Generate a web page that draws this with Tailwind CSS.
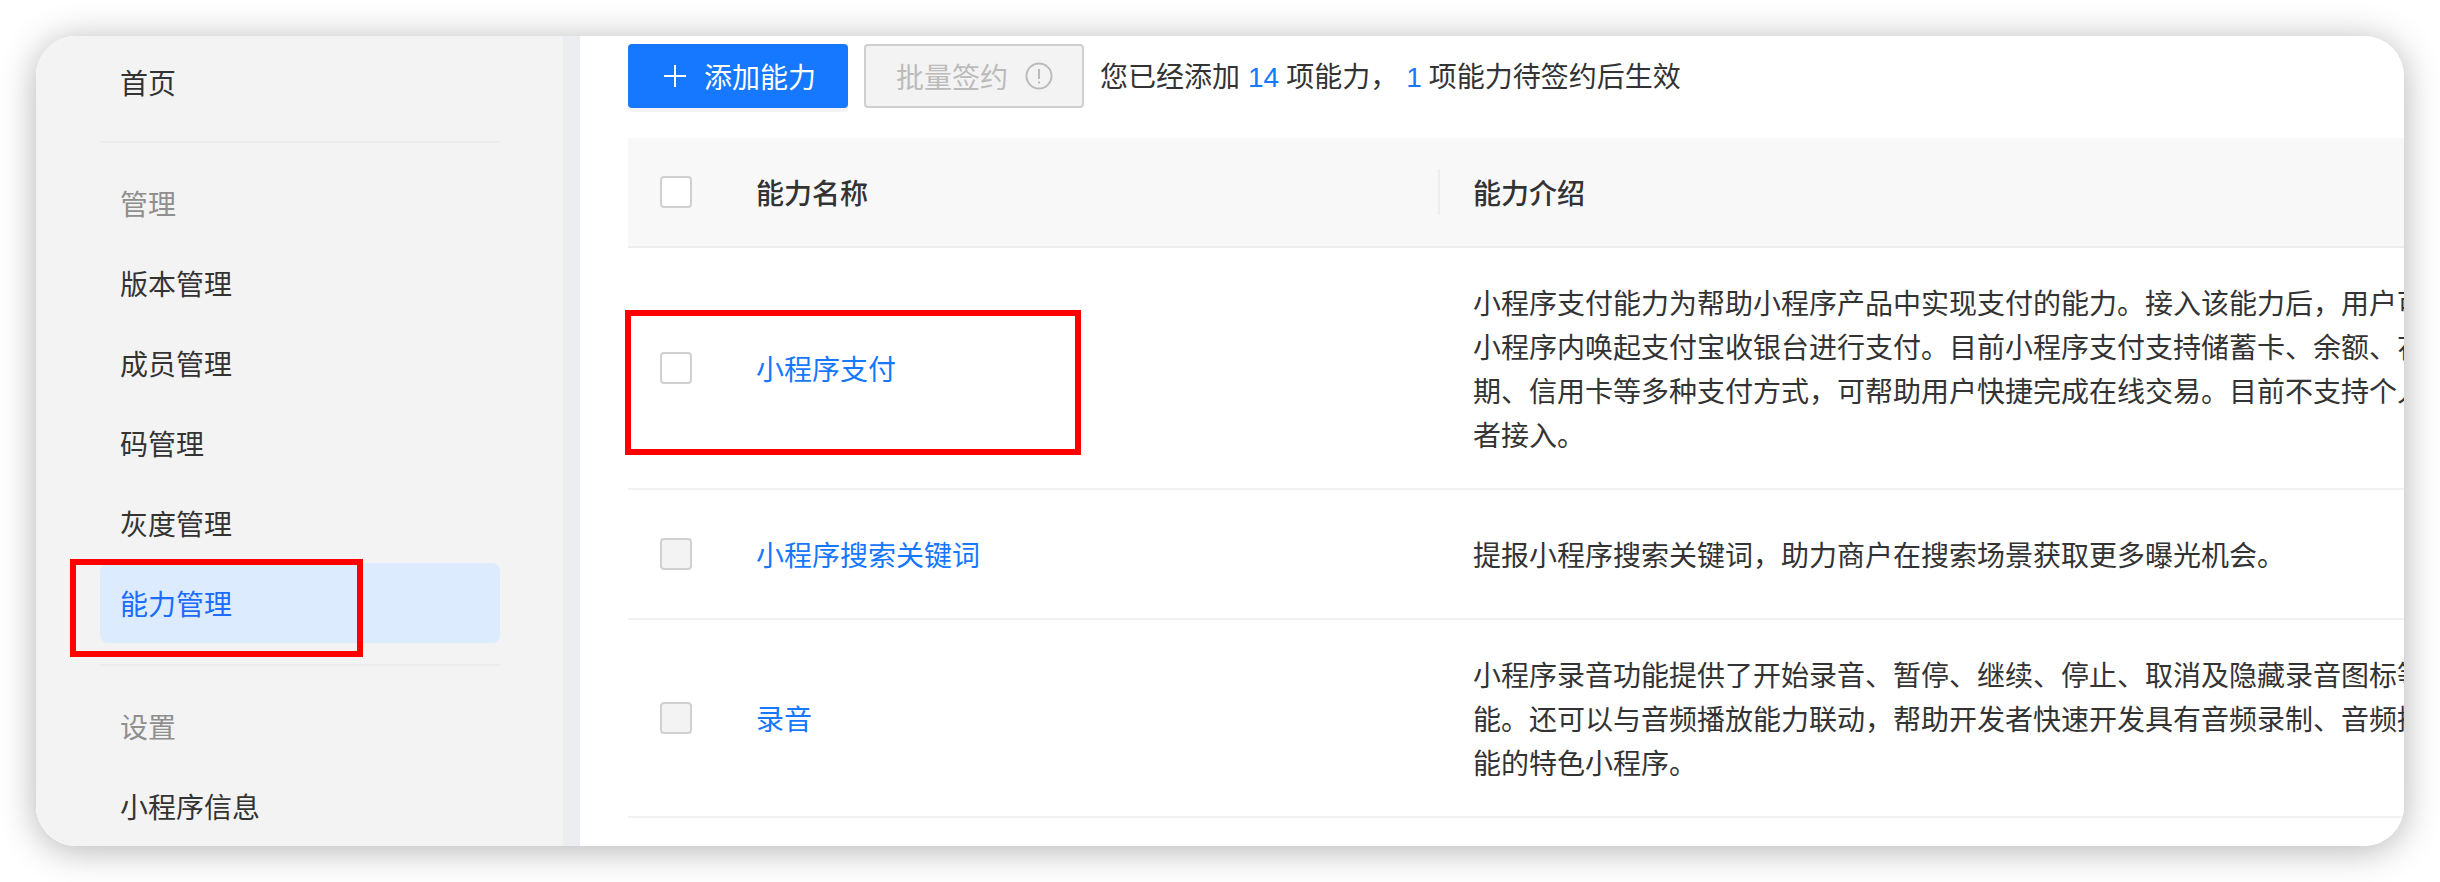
<!DOCTYPE html>
<html lang="zh-CN">
<head>
<meta charset="UTF-8" />
<title>能力管理</title>
<script src="https://cdn.jsdelivr.net/npm/@tailwindcss/browser@4"></script>
</head>
<body class="bg-white h-screen overflow-hidden font-['Noto_Sans_CJK_SC','Noto_Sans',sans-serif] text-[28px] text-[#333]">
<div class="relative ml-[36px] mt-[36px] w-[2368px] h-[810px] rounded-[40px] shadow-[0_4px_36px_rgba(0,0,0,0.3)]">
	<div class="flex h-full overflow-hidden rounded-[40px] bg-white">
		<!-- sidebar -->
		<div class="w-[527px] shrink-0 bg-[#f3f3f3] pt-[6px] pl-[64px] pr-[63px]">
			<div class="h-[80px] flex items-center pl-[20px]">首页</div>
			<div class="h-[2px] mt-[19px] bg-[#ececec]"></div>
			<div class="h-[80px] mt-[20px] flex items-center pl-[20px] text-[#8f8f8f]">管理</div>
			<div class="h-[80px] flex items-center pl-[20px]">版本管理</div>
			<div class="h-[80px] flex items-center pl-[20px]">成员管理</div>
			<div class="h-[80px] flex items-center pl-[20px]">码管理</div>
			<div class="h-[80px] flex items-center pl-[20px]">灰度管理</div>
			<div class="h-[80px] flex items-center pl-[20px] rounded-lg bg-[#dcebfd] text-[#1b6cff]">能力管理</div>
			<div class="h-[2px] mt-[21px] bg-[#ececec]"></div>
			<div class="h-[80px] mt-[20px] flex items-center pl-[20px] text-[#8f8f8f]">设置</div>
			<div class="h-[80px] flex items-center pl-[20px]">小程序信息</div>
		</div>
		<div class="w-[17px] shrink-0 bg-[#ecedf1]"></div>

		<!-- main -->
		<div class="flex-1 min-w-0 pt-[8px] pl-[48px]">
			<div class="flex items-center h-[64px]">
				<div class="flex items-center w-[220px] h-[64px] rounded bg-[#1677ff] text-white pl-[35px] shadow-[0_4px_0_#f3f3f3]">
					<svg class="w-[24px] h-[24px] mr-[17px]" viewBox="0 0 24 24" fill="none" stroke="white" stroke-width="2"><path d="M12 1v22M1 12h22" /></svg>
					添加能力
				</div>
				<div class="flex items-center w-[220px] h-[64px] ml-[16px] rounded border-2 border-[#cfcfcf] bg-[#f3f3f3] text-[#bbb] pl-[30px]">
					批量签约
					<svg class="w-[28px] h-[28px] ml-[17px]" viewBox="0 0 28 28" fill="none" stroke="#bbb" stroke-width="2"><circle cx="14" cy="14" r="12.5" /><path d="M14 7v10M14 19.5v2" /></svg>
				</div>
				<div class="ml-[16px] whitespace-nowrap">您已经添加<span class="ml-[8px] mr-[7px] text-[#1677ff] font-['Liberation_Sans',sans-serif]">14</span>项能力，<span class="ml-[8px] mr-[7px] text-[#1677ff] font-['Liberation_Sans',sans-serif]">1</span>项能力待签约后生效</div>
			</div>

			<!-- table -->
			<div class="mt-[30px]">
				<div class="flex items-center h-[110px] bg-[#f8f8f8] border-b-2 border-[#eeeeee] pl-[32px] font-medium">
					<div class="w-[32px] h-[32px] shrink-0 rounded border-2 border-[#d0d0d0] bg-white"></div>
					<div class="w-[746px] shrink-0 pl-[64px]">能力名称</div>
					<div class="h-[46px] border-l-2 border-[#eeeeee] pl-[33px] flex items-center">能力介绍</div>
				</div>

				<div class="flex items-center h-[242px] border-b-2 border-[#f2f2f2] pl-[32px]">
					<div class="w-[32px] h-[32px] shrink-0 rounded border-2 border-[#d0d0d0] bg-white"></div>
					<div class="w-[781px] shrink-0 pl-[64px] text-[#1677ff]">小程序支付</div>
					<div class="leading-[44px] whitespace-nowrap">
						<div>小程序支付能力为帮助小程序产品中实现支付的能力。接入该能力后，用户可</div>
						<div>小程序内唤起支付宝收银台进行支付。目前小程序支付支持储蓄卡、余额、花</div>
						<div>期、信用卡等多种支付方式，可帮助用户快捷完成在线交易。目前不支持个人</div>
						<div>者接入。</div>
					</div>
				</div>

				<div class="flex items-center h-[130px] border-b-2 border-[#f2f2f2] pl-[32px]">
					<div class="w-[32px] h-[32px] shrink-0 rounded border-2 border-[#d0d0d0] bg-[#f3f3f3]"></div>
					<div class="w-[781px] shrink-0 pl-[64px] text-[#1677ff]">小程序搜索关键词</div>
					<div class="leading-[44px] whitespace-nowrap">提报小程序搜索关键词，助力商户在搜索场景获取更多曝光机会。</div>
				</div>

				<div class="flex items-center h-[198px] border-b-2 border-[#f2f2f2] pl-[32px]">
					<div class="w-[32px] h-[32px] shrink-0 rounded border-2 border-[#d0d0d0] bg-[#f3f3f3]"></div>
					<div class="w-[781px] shrink-0 pl-[64px] text-[#1677ff]">录音</div>
					<div class="leading-[44px] whitespace-nowrap">
						<div>小程序录音功能提供了开始录音、暂停、继续、停止、取消及隐藏录音图标等</div>
						<div>能。还可以与音频播放能力联动，帮助开发者快速开发具有音频录制、音频播</div>
						<div>能的特色小程序。</div>
					</div>
				</div>
			</div>
		</div>
	</div>

	<!-- red annotation boxes -->
	<div class="absolute left-[34px] top-[523px] w-[293px] h-[98px] border-[6px] border-[#ff0000]"></div>
	<div class="absolute left-[589px] top-[274px] w-[456px] h-[145px] border-[6px] border-[#ff0000]"></div>
</div>
</body>
</html>
